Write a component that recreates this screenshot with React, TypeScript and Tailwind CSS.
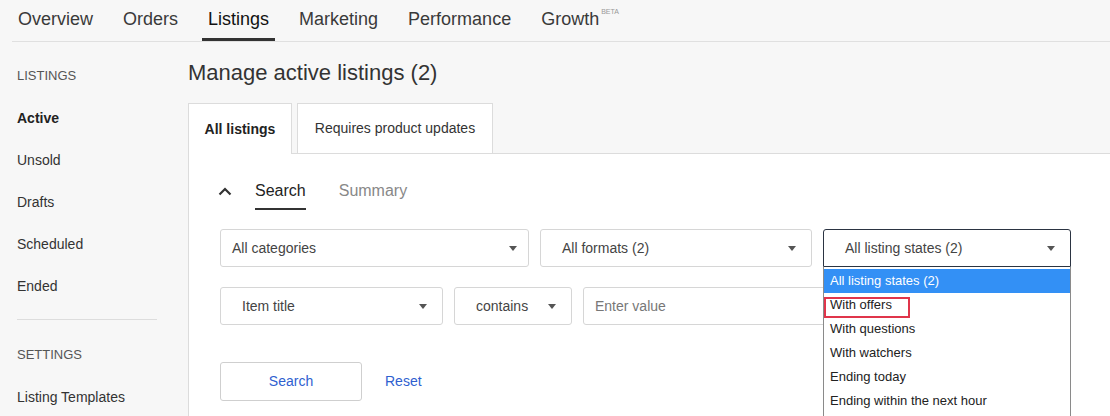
import React from 'react';

const navItems = ['Overview', 'Orders', 'Listings', 'Marketing', 'Performance', 'Growth'];
const sideListings = ['Active', 'Unsold', 'Drafts', 'Scheduled', 'Ended'];
const states = ['All listing states (2)', 'With offers', 'With questions', 'With watchers', 'Ending today', 'Ending within the next hour'];

function Caret() {
    return (
        <svg width="8" height="5" viewBox="0 0 8 5" className="shrink-0">
            <path d="M0 0h8L4 5z" fill="#555" />
        </svg>
    );
}

function Select({ label, width, pad, right = 'pr-[15px]', focused }: { label: string; width: string; pad: string; right?: string; focused?: boolean }) {
    return (
        <div
            className={`${width} ${pad} ${right} h-[38px] flex items-center justify-between bg-white border text-[14px] ${
                focused ? 'border-[#2b3442] rounded-t-[3px]' : 'border-[#d6d6d6] rounded-[3px]'
            }`}
        >
            <span className="text-[#444]">{label}</span>
            <Caret />
        </div>
    );
}

export default function App() {
    return (
        <div className="w-[1110px] h-[416px] overflow-hidden bg-[#f7f7f7] text-[#333] font-['Liberation_Sans',Arial,sans-serif]">
            {/* Top navigation */}
            <nav className="h-[42px] ml-[12px] border-b border-[#e0e0e0] flex gap-[18px]">
                {navItems.map((item) => (
                    <div
                        key={item}
                        className={`px-[6px] pt-[9px] pb-[8px] border-b-[3px] text-[18px] leading-[21px] ${
                            item === 'Listings' ? 'border-[#333] text-[#111]' : 'border-transparent text-[#3a3a3a]'
                        }`}
                    >
                        {item}
                        {item === 'Growth' && (
                            <span className="relative -top-[11px] ml-[2px] text-[7px] text-[#999]">BETA</span>
                        )}
                    </div>
                ))}
            </nav>

            <div className="flex h-[374px]">
                {/* Sidebar */}
                <aside className="w-[188px] shrink-0 pl-[17px] pt-[13px] text-[14px]">
                    <div className="h-[42px] flex items-center text-[13px] text-[#555]">LISTINGS</div>
                    {sideListings.map((s) => (
                        <div key={s} className={`h-[42px] flex items-center ${s === 'Active' ? 'font-bold text-[#222]' : 'text-[#333]'}`}>
                            {s}
                        </div>
                    ))}
                    <div className="w-[140px] mt-[12px] mb-[14px] border-t border-[#ddd]" />
                    <div className="h-[42px] flex items-center text-[13px] text-[#555]">SETTINGS</div>
                    <div className="h-[42px] flex items-center text-[#333]">Listing Templates</div>
                </aside>

                {/* Main */}
                <main className="flex-1 flex flex-col pt-[18px]">
                    <h1 className="text-[22px] leading-[26px] text-[#333]">Manage active listings (2)</h1>

                    <div className="mt-[17px] flex gap-[5px] items-start relative z-10 text-[14px]">
                        <div className="w-[104px] h-[51px] -mb-px bg-white border border-b-0 border-[#dcdcdc] flex items-center justify-center font-bold text-[#222]">
                            All listings
                        </div>
                        <div className="w-[196px] h-[50px] bg-white border border-b-0 border-[#dcdcdc] flex items-center justify-center text-[#333]">
                            Requires product updates
                        </div>
                    </div>

                    <section className="flex-1 bg-white border-t border-l border-[#dcdcdc] pl-[31px] pt-[27px]">
                        <div className="flex items-start">
                            <svg width="14" height="9" viewBox="0 0 14 9" className="mt-[6px] ml-[-2px]">
                                <polyline points="1.5,7.5 7,2 12.5,7.5" fill="none" stroke="#333" strokeWidth="2.2" />
                            </svg>
                            <div className="ml-[23px] pb-[7px] border-b-2 border-[#333] text-[16px] leading-[20px] text-[#222]">Search</div>
                            <div className="ml-[33px] text-[16px] leading-[20px] text-[#888]">Summary</div>
                        </div>

                        <div className="mt-[19px] flex gap-[11px]">
                            <Select label="All categories" width="w-[309px]" pad="pl-[11px]" right="pr-[11px]" />
                            <Select label="All formats (2)" width="w-[272px]" pad="pl-[21px]" />
                            <div className="relative z-20">
                                <Select label="All listing states (2)" width="w-[248px]" pad="pl-[21px]" focused />
                                <ul className="absolute left-0 top-full w-[248px] pt-[2px] bg-white border-x border-[#8a8a8a] text-[13px]">
                                    {states.map((s, i) => (
                                        <li
                                            key={s}
                                            className={`h-[24px] flex items-center pl-[6px] ${i === 0 ? 'bg-[#3390f5] text-white' : 'text-[#222]'}`}
                                        >
                                            {s}
                                        </li>
                                    ))}
                                    <li className="h-[24px]" />
                                    <div className="absolute left-0 top-[30px] w-[86px] h-[21px] border-2 border-[#e0354b]" />
                                </ul>
                            </div>
                        </div>

                        <div className="mt-[20px] flex gap-[11px]">
                            <Select label="Item title" width="w-[223px]" pad="pl-[21px]" />
                            <Select label="contains" width="w-[118px]" pad="pl-[21px]" />
                            <div className="w-[487px] h-[38px] pl-[11px] flex items-center border border-[#d6d6d6] rounded-[3px] text-[14px] text-[#777]">
                                Enter value
                            </div>
                        </div>

                        <div className="mt-[37px] flex items-center">
                            <button className="w-[142px] h-[39px] border border-[#cfcfcf] rounded-[3px] bg-white text-[14px] text-[#2f5fd0]">
                                Search
                            </button>
                            <span className="ml-[23px] text-[14px] text-[#2f5fd0]">Reset</span>
                        </div>
                    </section>
                </main>
            </div>
        </div>
    );
}
